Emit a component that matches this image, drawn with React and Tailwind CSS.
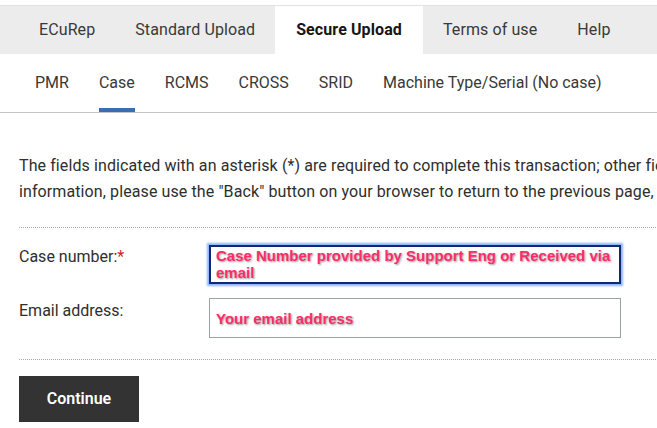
import React from 'react';

const topTabs = ['ECuRep', 'Standard Upload', 'Secure Upload', 'Terms of use', 'Help'];
const subTabs = ['PMR', 'Case', 'RCMS', 'CROSS', 'SRID', 'Machine Type/Serial (No case)'];

const App = () => {
    return (
        <div className="w-full min-h-screen overflow-hidden bg-white text-[#2e2e2e] font-['Roboto','Liberation_Sans',sans-serif]">
            {/* Top navigation */}
            <div className="pt-[3px] border-t-2 border-white">
                <nav className="flex h-[49px] bg-[#ececec] pl-[19px] border-t border-[#e2e2e2]">
                    {topTabs.map((tab) => (
                        <div
                            key={tab}
                            className={`flex items-center px-5 text-[16px] tracking-[0.1px] ${tab === 'Secure Upload' ? 'bg-white font-bold text-[#161616] px-[21px]' : 'text-[#393939]'}`}
                        >
                            {tab}
                        </div>
                    ))}
                </nav>
            </div>

            {/* Sub navigation */}
            <nav className="flex h-[59px] pl-[19px] border-b border-[#c4c4c4]">
                {subTabs.map((tab) => (
                    <div key={tab} className="relative flex items-center px-[15px] first:pl-4 text-[16px] text-[#393939]">
                        {tab}
                        {tab === 'Case' && (
                            <span className="absolute left-[15px] right-[15px] bottom-0 h-1 bg-[#3c6db0]"></span>
                        )}
                    </div>
                ))}
            </nav>

            <div className="px-[19px]">
                <div className="mt-[40px] text-[16px] leading-[26px] whitespace-nowrap tracking-[0.1px]">
                    <p>The fields indicated with an asterisk (*) are required to complete this transaction; other fields are optional. If you do not want to provide us with the required</p>
                    <p>information, please use the "Back" button on your browser to return to the previous page, or close the window or browser session that is displaying this page.</p>
                </div>

                <div className="mt-[22px] border-t border-dotted border-[#a8a8a8] mr-[-40px]"></div>

                <form className="pt-[17px]">
                    <div className="flex">
                        <label className="w-[190px] text-[16px] leading-[24px]">
                            Case number:<span className="text-[#e0182d]">*</span>
                        </label>
                        <textarea
                            rows={2}
                            placeholder="Case Number provided by Support Eng or Received via email"
                            className="w-[412px] h-[39px] resize-none overflow-hidden border-2 border-[#0c2b73] shadow-[0_0_2px_2px_#8ab4ff] px-[5px] pt-0 text-[15px] leading-[17px] font-['Liberation_Sans',Arial,sans-serif] font-bold outline-none placeholder:text-[#fb2c6c] placeholder:opacity-100 placeholder:[text-shadow:1px_1px_2px_#9a9a9a]"
                        ></textarea>
                    </div>

                    <div className="flex mt-[14px]">
                        <label className="w-[190px] pt-[1px] text-[16px] leading-[24px]">Email address:</label>
                        <input
                            type="text"
                            placeholder="Your email address"
                            className="w-[412px] h-[40px] border border-[#9aa2a2] px-[6px] text-[15px] font-['Liberation_Sans',Arial,sans-serif] font-bold outline-none placeholder:text-[#fb2c6c] placeholder:opacity-100 placeholder:[text-shadow:1px_1px_2px_#9a9a9a]"
                        />
                    </div>

                    <div className="mt-[21px] border-t border-dotted border-[#a8a8a8] mr-[-40px]"></div>

                    <button
                        type="button"
                        className="mt-[16px] w-[120px] h-[46px] bg-[#333333] text-white text-[16px] font-semibold"
                    >
                        Continue
                    </button>
                </form>
            </div>
        </div>
    );
};

export default App;
